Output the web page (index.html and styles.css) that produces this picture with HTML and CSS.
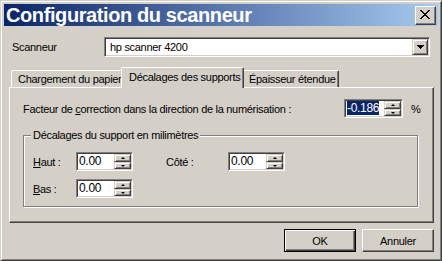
FILE: index.html
```html
<!DOCTYPE html>
<html lang="fr">
<head>
<meta charset="utf-8">
<title>Configuration du scanneur</title>
<link rel="stylesheet" href="styles.css">
</head>
<body>
<div class="window">
  <div class="titlebar">
    <span class="title">Configuration du scanneur</span>
    <span class="close">
      <svg width="11" height="10" viewBox="0 0 11 10" shape-rendering="crispEdges"><path d="M1 0 L10 9 M0 0 L9 9 M10 0 L1 9 M9 0 L0 9" stroke="#000" stroke-width="1.4" fill="none"/></svg>
    </span>
  </div>
  <div class="body">
    <div class="scanner-row">
      <span class="scanner-label">Scanneur</span>
      <div class="combo">
        <span class="combo-text">hp scanner 4200</span>
        <span class="combo-btn"><svg width="7" height="4" viewBox="0 0 7 4" shape-rendering="crispEdges"><polygon points="0,0 7,0 3.5,4" fill="#000"/></svg></span>
      </div>
    </div>
    <div class="tabs">
      <div class="tab tab-1">Chargement du papier</div>
      <div class="tab tab-2 active">Décalages des supports</div>
      <div class="tab tab-3">Épaisseur étendue</div>
    </div>
    <div class="panel">
      <div class="factor-row">
        <span class="factor-label">Facteur de <u>c</u>orrection dans la direction de la numérisation :</span>
        <div class="spin spin-factor">
          <div class="spin-in">
            <span class="spin-text"><span class="sel">-0.186</span></span>
            <span class="spin-btns"><span class="sb sb-up"><i class="arr-up"></i></span><span class="sb sb-down"><i class="arr-down"></i></span></span>
          </div>
        </div>
        <span class="pct">%</span>
      </div>
      <div class="group">
        <span class="legend">Décalages du support en milimètres</span>
        <div class="group-grid">
          <span class="glabel"><u>H</u>aut :</span>
          <div class="spin">
            <div class="spin-in">
              <span class="spin-text">0.00</span>
              <span class="spin-btns"><span class="sb sb-up"><i class="arr-up"></i></span><span class="sb sb-down"><i class="arr-down"></i></span></span>
            </div>
          </div>
          <span></span>
          <span class="glabel">Côté :</span>
          <div class="spin">
            <div class="spin-in">
              <span class="spin-text">0.00</span>
              <span class="spin-btns"><span class="sb sb-up"><i class="arr-up"></i></span><span class="sb sb-down"><i class="arr-down"></i></span></span>
            </div>
          </div>
          <span class="glabel"><u>B</u>as :</span>
          <div class="spin">
            <div class="spin-in">
              <span class="spin-text">0.00</span>
              <span class="spin-btns"><span class="sb sb-up"><i class="arr-up"></i></span><span class="sb sb-down"><i class="arr-down"></i></span></span>
            </div>
          </div>
        </div>
      </div>
    </div>
    <div class="buttons">
      <button class="btn btn-default">OK</button>
      <button class="btn">Annuler</button>
    </div>
  </div>
</div>
</body>
</html>
```
FILE: styles.css
```css
html, body {
  margin: 0;
  padding: 0;
  background: #d4d0c8;
}
body {
  font-family: "Liberation Sans", Arial, sans-serif;
  font-size: 11px;
  letter-spacing: -0.3px;
  color: #000;
}
.window {
  width: 442px;
  height: 261px;
  box-sizing: border-box;
  border: 1px solid;
  border-color: #d4d0c8 #404040 #404040 #d4d0c8;
  box-shadow: inset 1px 1px #fff, inset -1px -1px #808080;
  padding: 3px;
  background: #d4d0c8;
}
.titlebar {
  height: 22px;
  background: linear-gradient(to right, #0a246a, #a6caf0);
  display: flex;
  align-items: center;
  justify-content: space-between;
  padding: 0 2px 0 2px;
}
.title {
  color: #fff;
  font-family: "Liberation Sans", Arial, sans-serif;
  font-weight: bold;
  font-size: 20px;
  letter-spacing: -0.4px;
  line-height: 22px;
  white-space: nowrap;
}
.close {
  width: 21px;
  height: 19px;
  box-sizing: border-box;
  border: 1px solid;
  border-color: #fff #404040 #404040 #fff;
  box-shadow: inset -1px -1px #808080;
  background: #d4d0c8;
  display: flex;
  align-items: center;
  justify-content: center;
}
.close svg { display: block; }
.body {
  display: flex;
  flex-direction: column;
  padding: 0 4px 0 5px;
}
.scanner-row {
  display: flex;
  align-items: center;
  margin-top: 11px;
  padding-left: 3px;
}
.scanner-label {
  width: 92px;
}
.combo {
  width: 326px;
  height: 20px;
  box-sizing: border-box;
  border: 1px solid;
  border-color: #808080 #fff #fff #808080;
  box-shadow: inset 1px 1px #404040, inset -1px -1px #d4d0c8;
  background: #fff;
  display: flex;
  align-items: center;
  padding: 1px;
}
.combo-text {
  flex: 1;
  padding-left: 4px;
}
.combo-btn {
  width: 16px;
  height: 16px;
  box-sizing: border-box;
  border: 1px solid;
  border-color: #d4d0c8 #404040 #404040 #d4d0c8;
  box-shadow: inset 1px 1px #fff, inset -1px -1px #808080;
  background: #d4d0c8;
  display: flex;
  align-items: center;
  justify-content: center;
}
.combo-btn svg { display: block; }
.tabs {
  display: flex;
  align-items: flex-end;
  height: 20px;
  margin-top: 10px;
  padding-left: 2px;
}
.tab {
  height: 17px;
  box-sizing: border-box;
  border: 1px solid;
  border-bottom: none;
  border-color: #fff #404040 transparent #fff;
  box-shadow: inset -1px 0 #808080;
  border-radius: 2px 2px 0 0;
  padding: 1px 5px 0 6px;
  line-height: 15px;
  white-space: nowrap;
  overflow: hidden;
  background: #d4d0c8;
}
.tab-1 { width: 112px; }
.tab-2 { width: 123px; }
.tab-3 { width: 97px; }
.tab.active {
  height: 21px;
  margin: 0 -2px -1px;
  position: relative;
  z-index: 1;
  padding: 2px 6px 0 7px;
  line-height: 15px;
}
.panel {
  height: 136px;
  box-sizing: border-box;
  border: 1px solid;
  border-color: #fff #404040 #404040 #fff;
  box-shadow: inset -1px -1px #808080;
  padding: 11px 0 0 13px;
}
.factor-row {
  display: flex;
  align-items: center;
  height: 19px;
}
.factor-label {
  flex: 1;
}
.pct {
  width: 22px;
  margin-left: 8px;
}
.spin {
  width: 57px;
  height: 19px;
  box-sizing: border-box;
  border: 1px solid;
  border-color: #808080 #fff #fff #808080;
  background: #fff;
}
.spin-factor { width: 59px; }
.spin-in {
  height: 100%;
  box-sizing: border-box;
  border: 1px solid;
  border-color: #404040 #d4d0c8 #d4d0c8 #404040;
  display: flex;
}
.spin-text {
  flex: 1;
  padding-left: 1px;
  font-size: 12px;
  line-height: 15px;
}
.sel {
  background: #0a246a;
  color: #fff;
}
.spin-btns {
  width: 17px;
  display: flex;
  flex-direction: column;
}
.sb {
  box-sizing: border-box;
  border: 1px solid;
  border-color: #d4d0c8 #404040 #404040 #d4d0c8;
  box-shadow: inset 1px 1px #fff, inset -1px -1px #808080;
  background: #d4d0c8;
  display: flex;
  align-items: center;
  justify-content: center;
}
.sb-up { height: 8px; }
.sb-down { height: 7px; }
.arr-up, .arr-down {
  width: 0;
  height: 0;
  border-left: 2px solid transparent;
  border-right: 2px solid transparent;
}
.arr-up { border-bottom: 2px solid #000; }
.arr-down { border-top: 2px solid #000; }
.group {
  position: relative;
  width: 395px;
  height: 72px;
  box-sizing: border-box;
  margin-top: 17px;
  border: 1px solid #808080;
  box-shadow: inset 1px 1px #fff, 1px 1px #fff;
  padding: 16px 0 0 9px;
}
.legend {
  position: absolute;
  top: -8px;
  left: 7px;
  padding: 0 2px;
  line-height: 14px;
  background: #d4d0c8;
  white-space: nowrap;
}
.group-grid {
  display: grid;
  grid-template-columns: 43px 57px 33px 62px 57px;
  grid-auto-rows: 19px;
  row-gap: 8px;
  align-items: center;
}
.buttons {
  display: flex;
  justify-content: flex-end;
  gap: 6px;
  margin-top: 6px;
}
.btn {
  width: 72px;
  height: 23px;
  box-sizing: border-box;
  border: 1px solid;
  border-color: #fff #404040 #404040 #fff;
  box-shadow: inset -1px -1px #808080;
  background: #d4d0c8;
  font-family: inherit;
  font-size: 11px;
  letter-spacing: -0.3px;
  color: #000;
  padding: 0;
}
.btn-default {
  border: 1px solid #000;
  box-shadow: inset 1px 1px #fff, inset -1px -1px #404040, inset -2px -2px #808080;
}
```
